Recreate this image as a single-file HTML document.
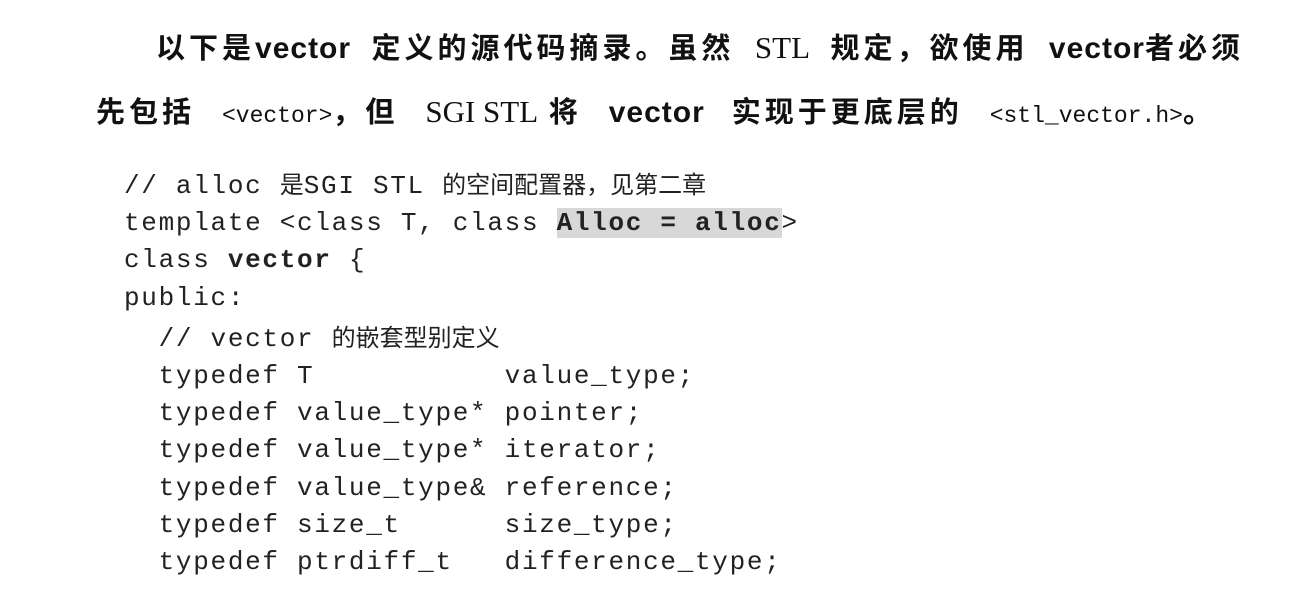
<!DOCTYPE html>
<html><head><meta charset="utf-8"><style>
html,body{margin:0;padding:0;background:#fff;}
body{width:1316px;height:596px;position:relative;overflow:hidden;color:#111;}
.p{position:absolute;display:flex;justify-content:space-between;align-items:baseline;font-family:"Noto Sans CJK SC",sans-serif;font-weight:bold;font-size:29px;letter-spacing:4px;white-space:nowrap;line-height:40px;}
.s{font-family:"Liberation Sans",sans-serif;font-weight:bold;font-size:30px;letter-spacing:1px;}
.r{font-family:"Liberation Serif",serif;font-weight:normal;font-size:31px;letter-spacing:0;}
.m{font-family:"Liberation Mono",monospace;font-weight:normal;font-size:23px;letter-spacing:0;}
pre{position:absolute;left:124px;top:164px;margin:0;font-family:"Liberation Mono","Noto Sans CJK SC",monospace;font-size:26px;letter-spacing:1.7px;line-height:37.2px;color:#222;}
pre .c{font-family:"Noto Sans CJK SC",sans-serif;font-size:24px;letter-spacing:0;}
.hl{background:#d8d8d8;}
</style></head><body>
<div class="p" style="left:156px;top:26px;width:1088px;">
<span>以下是<span class="s">vector</span></span><span>定义的源代码摘录。虽然</span><span class="r">STL</span><span>规定，欲使用</span><span><span class="s">vector</span>者必须</span>
</div>
<div class="p" style="left:96px;top:90px;width:1120px;">
<span>先包括</span><span><span class="m">&lt;vector&gt;</span>，但</span><span><span class="r">SGI STL</span> 将</span><span class="s">vector</span><span>实现于更底层的</span><span><span class="m">&lt;stl_vector.h&gt;</span>。</span>
</div>
<pre>// alloc <span class="c">是</span>SGI STL <span class="c">的空间配置器，见第二章</span>
template &lt;class T, class <b class="hl">Alloc = alloc</b>&gt;
class <b>vector</b> {
public:
  // vector <span class="c">的嵌套型别定义</span>
  typedef T           value_type;
  typedef value_type* pointer;
  typedef value_type* iterator;
  typedef value_type&amp; reference;
  typedef size_t      size_type;
  typedef ptrdiff_t   difference_type;</pre>
</body></html>
